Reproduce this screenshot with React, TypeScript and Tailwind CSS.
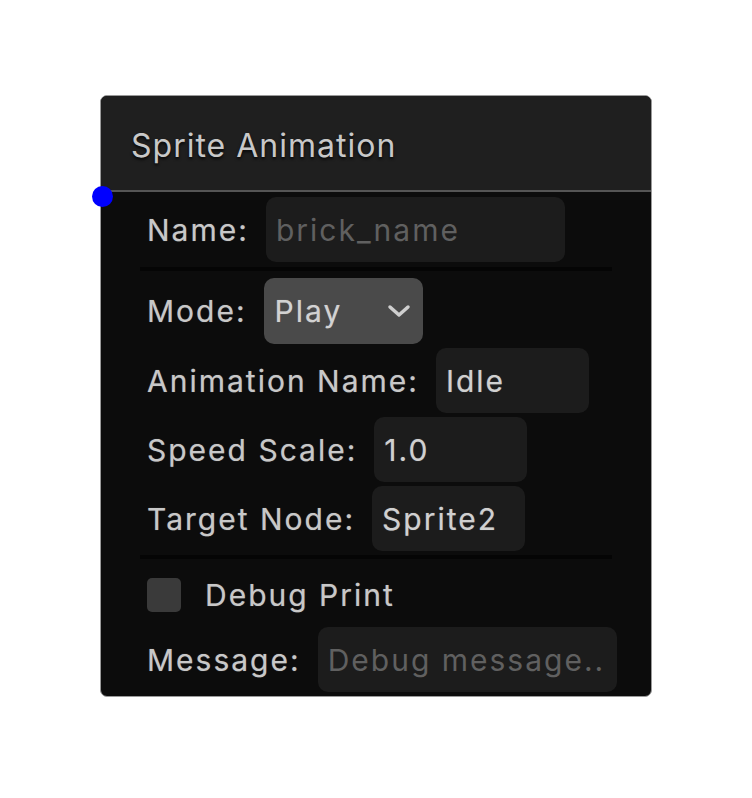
import React from "react";

const Chevron = () => (
  <svg width="24" height="16" viewBox="0 0 24 16" fill="none">
    <path d="M3 4 L12 12 L21 4" stroke="#cfcfcf" strokeWidth="3.5" strokeLinecap="round" strokeLinejoin="round" />
  </svg>
);

const Label = ({ children }: { children: React.ReactNode }) => (
  <span className="text-[30px] leading-none tracking-[2px] text-[#c8c8c8] whitespace-nowrap [text-shadow:0_0_1px_rgba(200,200,200,0.5)]">{children}</span>
);

const Field = ({ value, placeholder, w }: { value?: string; placeholder?: string; w: string }) => (
  <div className={`${w} h-[65px] shrink-0 rounded-[10px] bg-[#1c1c1c] flex items-center px-[10px] overflow-hidden`}>
    {value ? (
      <span className="text-[30px] leading-none tracking-[2px] text-[#d0d0d0] whitespace-nowrap [text-shadow:0_0_1px_rgba(200,200,200,0.5)]">{value}</span>
    ) : (
      <span className="text-[30px] leading-none tracking-[2px] text-[#606060] whitespace-nowrap">{placeholder}</span>
    )}
  </div>
);

export default function App() {
  return (
    <div className="w-[752px] h-[798px] bg-white pt-[95px] pl-[100px]" style={{ fontFamily: "Inter, 'Noto Sans', sans-serif" }}>
      <div className="relative w-[552px] h-[602px] rounded-[7px] border border-[#9a9a9a] bg-[#0c0c0c] flex flex-col">
        <div className="h-[96px] shrink-0 rounded-t-[6px] bg-[#1f1f1f] border-b-2 border-[#555555] flex items-center pl-[30px] pt-[5px]">
          <span className="text-[32px] leading-none tracking-[1px] text-[#c8c8c8] [text-shadow:0_2px_3px_rgba(0,0,0,0.8)]">Sprite Animation</span>
        </div>
        <div className="absolute left-[-9px] top-[90px] w-[21px] h-[21px] rounded-full bg-[#0000ff]" />
        <div className="flex flex-col px-[39px] pt-[5px]">
          <div className="flex items-center gap-[17px] px-[7px]">
            <Label>Name:</Label>
            <Field placeholder="brick_name" w="w-[299px]" />
          </div>
          <div className="mt-[5px] h-[4px] bg-[#050505]" />
          <div className="mt-[7px] flex items-center gap-[17px] px-[7px]">
            <Label>Mode:</Label>
            <div className="w-[159px] h-[66px] rounded-[10px] bg-[#4a4a4a] flex items-center justify-between pl-[11px] pr-[12px]">
              <span className="text-[30px] leading-none tracking-[2px] text-[#d2d2d2] [text-shadow:0_0_1px_rgba(200,200,200,0.5)]">Play</span>
              <Chevron />
            </div>
          </div>
          <div className="mt-[4px] flex items-center gap-[17px] px-[7px]">
            <Label>Animation Name:</Label>
            <Field value="Idle" w="w-[153px]" />
          </div>
          <div className="mt-[4px] flex items-center gap-[17px] px-[7px]">
            <Label>Speed Scale:</Label>
            <Field value="1.0" w="w-[153px]" />
          </div>
          <div className="mt-[4px] flex items-center gap-[17px] px-[7px]">
            <Label>Target Node:</Label>
            <Field value="Sprite2" w="w-[153px]" />
          </div>
          <div className="mt-[4px] h-[4px] bg-[#050505]" />
          <div className="mt-[4px] h-[64px] flex items-center gap-[24px] px-[7px]">
            <div className="w-[34px] h-[34px] rounded-[5px] bg-[#3a3a3a]" />
            <Label>Debug Print</Label>
          </div>
          <div className="flex items-center gap-[17px] px-[7px]">
            <Label>Message:</Label>
            <Field placeholder="Debug message.." w="w-[299px]" />
          </div>
        </div>
      </div>
    </div>
  );
}
